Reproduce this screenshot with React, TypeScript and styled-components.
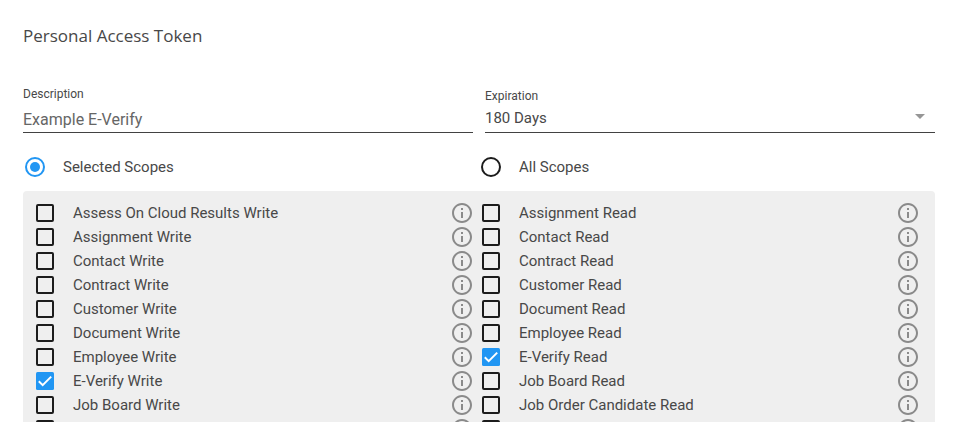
import React, { useState } from "react";
import styled, { createGlobalStyle } from "styled-components";

const GlobalStyle = createGlobalStyle`
  *, *::before, *::after { box-sizing: border-box; }
  html, body { margin: 0; background: #fff; }
  body {
    font-family: Roboto, "Liberation Sans", sans-serif;
    font-size: 15px;
    color: #484848;
  }
`;

const Page = styled.main`
  height: 100vh;
  overflow: hidden;
  padding: 24px 22px 0 23px;
`;

const Title = styled.h1`
  margin: 0;
  font-family: "Open Sans", "Noto Sans", sans-serif;
  font-size: 17px;
  font-weight: 400;
  line-height: 24px;
`;

const Fields = styled.div`
  display: grid;
  grid-template-columns: 1fr 1fr;
  gap: 12px;
  margin-top: 38px;
`;

const Field = styled.div`
  display: flex;
  flex-direction: column;
  justify-content: flex-end;
  height: 47px;
  border-bottom: 1px solid #424242;
`;

const FieldLabel = styled.label`
  font-size: 12px;
  line-height: 16px;
`;

const TextInput = styled.input`
  width: 100%;
  height: 30px;
  padding: 4px 0 0;
  border: 0;
  outline: 0;
  background: transparent;
  font: 400 16px Roboto, sans-serif;
  color: #666;
`;

const SelectBox = styled.div`
  display: grid;
  align-items: center;
  height: 28px;
  > * { grid-area: 1 / 1; }
  > svg { justify-self: end; margin: 0 10px 4px 0; pointer-events: none; }
`;

const Select = styled.select`
  appearance: none;
  width: 100%;
  height: 28px;
  padding: 0;
  border: 0;
  outline: 0;
  background: transparent;
  font: 400 15px Roboto, sans-serif;
  color: #484848;
`;

const Modes = styled.div`
  display: grid;
  grid-template-columns: 1fr 1fr;
  margin: 22px 0 12px;
`;

const Option = styled.label`
  display: flex;
  flex: 1;
  align-items: center;
  gap: 16px;
  height: 24px;
  cursor: pointer;
`;

const Mark = styled.span`
  display: grid;
  width: 24px;
  height: 24px;
  > * { grid-area: 1 / 1; }
  > svg { pointer-events: none; }
`;

const Native = styled.input`
  width: 24px;
  height: 24px;
  margin: 0;
  opacity: 0;
  cursor: pointer;
`;

const Panel = styled.section`
  display: grid;
  grid-template-columns: 1fr 1fr;
  padding: 10px;
  border-radius: 4px;
  background: #efefef;
`;

const List = styled.ul`
  margin: 0;
  padding: 0;
  list-style: none;
`;

const Row = styled.li`
  display: flex;
  align-items: center;
  height: 24px;
  padding-right: 5px;
`;

const InfoButton = styled.button`
  display: block;
  width: 24px;
  height: 24px;
  padding: 0;
  border: 0;
  background: transparent;
  color: #8a8a8a;
  cursor: pointer;
`;

const writeScopes = [
  "Assess On Cloud Results Write",
  "Assignment Write",
  "Contact Write",
  "Contract Write",
  "Customer Write",
  "Document Write",
  "Employee Write",
  "E-Verify Write",
  "Job Board Write",
  "Job Order Candidate Write",
];

const readScopes = [
  "Assignment Read",
  "Contact Read",
  "Contract Read",
  "Customer Read",
  "Document Read",
  "Employee Read",
  "E-Verify Read",
  "Job Board Read",
  "Job Order Candidate Read",
  "Job Order Read",
];

function CheckIcon({ checked }: { checked: boolean }) {
  return checked ? (
    <svg width="24" height="24" viewBox="0 0 24 24" aria-hidden="true">
      <rect x="3" y="3" width="18" height="18" rx="1.5" fill="#2196f3" />
      <path d="M5.8 12.2l3.9 3.9 8.5-8.5" fill="none" stroke="#fff" strokeWidth="2" />
    </svg>
  ) : (
    <svg width="24" height="24" viewBox="0 0 24 24" aria-hidden="true">
      <rect x="4" y="4" width="16" height="16" rx="1" fill="none" stroke="#1c1c1c" strokeWidth="2" />
    </svg>
  );
}

function RadioIcon({ checked }: { checked: boolean }) {
  const color = checked ? "#2196f3" : "#1c1c1c";
  return (
    <svg width="24" height="24" viewBox="0 0 24 24" aria-hidden="true">
      <circle cx="12" cy="12" r="9" fill="none" stroke={color} strokeWidth="2" />
      {checked && <circle cx="12" cy="12" r="5" fill={color} />}
    </svg>
  );
}

function InfoIcon() {
  return (
    <svg width="24" height="24" viewBox="0 0 24 24" fill="currentColor" aria-hidden="true">
      <path d="M11 7h2v2h-2zm0 4h2v6h-2zm1-9C6.48 2 2 6.48 2 12s4.48 10 10 10 10-4.48 10-10S17.52 2 12 2zm0 18c-4.41 0-8-3.59-8-8s3.59-8 8-8 8 3.59 8 8-3.59 8-8 8z" />
    </svg>
  );
}

type ListProps = {
  scopes: string[];
  selected: Set<string>;
  onToggle: (scope: string) => void;
};

function ScopeList({ scopes, selected, onToggle }: ListProps) {
  return (
    <List>
      {scopes.map((scope) => (
        <Row key={scope}>
          <Option>
            <Mark>
              <Native type="checkbox" checked={selected.has(scope)} onChange={() => onToggle(scope)} />
              <CheckIcon checked={selected.has(scope)} />
            </Mark>
            {scope}
          </Option>
          <InfoButton type="button" aria-label={`About ${scope}`}>
            <InfoIcon />
          </InfoButton>
        </Row>
      ))}
    </List>
  );
}

export default function App() {
  const [description, setDescription] = useState("Example E-Verify");
  const [mode, setMode] = useState("Selected Scopes");
  const [selected, setSelected] = useState(new Set(["E-Verify Write", "E-Verify Read"]));

  const toggle = (scope: string) => {
    const next = new Set(selected);
    if (!next.delete(scope)) next.add(scope);
    setSelected(next);
  };

  return (
    <Page>
      <GlobalStyle />
      <Title>Personal Access Token</Title>
      <Fields>
        <Field>
          <FieldLabel htmlFor="description">Description</FieldLabel>
          <TextInput id="description" value={description} onChange={(e) => setDescription(e.target.value)} />
        </Field>
        <Field>
          <FieldLabel htmlFor="expiration">Expiration</FieldLabel>
          <SelectBox>
            <Select id="expiration" defaultValue="180">
              <option value="180">180 Days</option>
            </Select>
            <svg width="10" height="5" viewBox="0 0 10 5" aria-hidden="true">
              <path d="M0 0h10L5 5z" fill="#969696" />
            </svg>
          </SelectBox>
        </Field>
      </Fields>
      <Modes role="radiogroup" aria-label="Scopes">
        {["Selected Scopes", "All Scopes"].map((name) => (
          <Option key={name}>
            <Mark>
              <Native type="radio" name="mode" checked={mode === name} onChange={() => setMode(name)} />
              <RadioIcon checked={mode === name} />
            </Mark>
            {name}
          </Option>
        ))}
      </Modes>
      <Panel>
        <ScopeList scopes={writeScopes} selected={selected} onToggle={toggle} />
        <ScopeList scopes={readScopes} selected={selected} onToggle={toggle} />
      </Panel>
    </Page>
  );
}
